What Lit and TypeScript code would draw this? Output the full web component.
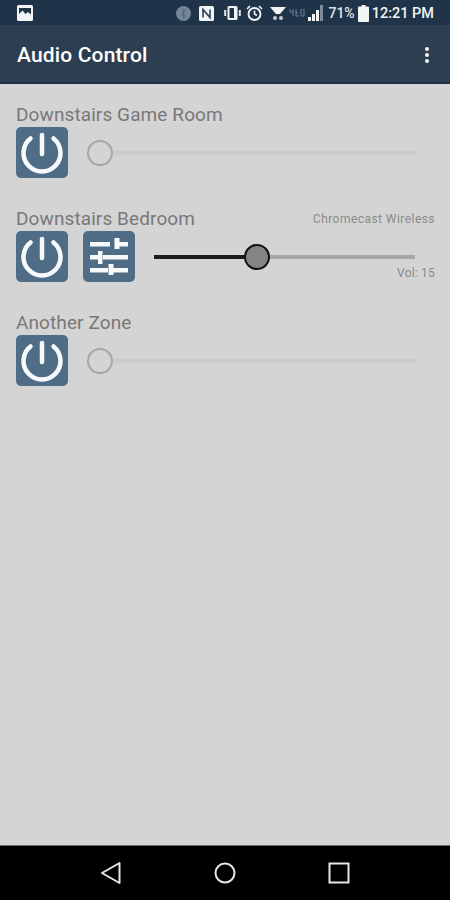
import { LitElement, css, html, svg } from "lit";
import { customElement, property } from "lit/decorators.js";

const powerIcon = svg`
  <path d="M14.500 11.500A18.500 18.500 0 1 0 37.500 11.500" fill="none" stroke="#f7f9fa" stroke-width="4.500" stroke-linecap="round"/>
  <path d="M26 8v19" fill="none" stroke="#f7f9fa" stroke-width="4.500" stroke-linecap="round"/>`;

const tuneIcon = svg`
  <g fill="#f7f9fa">
    <rect x="7" y="11" width="20" height="4.500"/><rect x="36" y="11" width="9" height="4.500"/><rect x="31.500" y="7" width="5" height="11"/>
    <rect x="7" y="24" width="8" height="4.500"/><rect x="20" y="24" width="25" height="4.500"/><rect x="15" y="20" width="4.500" height="13"/>
    <rect x="7" y="37" width="18" height="4.500"/><rect x="30" y="37" width="15" height="4.500"/><rect x="25.500" y="33" width="5" height="11"/>
  </g>`;

@customElement("vol-slider")
class VolSlider extends LitElement {
  @property({ type: Number }) value = 0;
  @property({ type: Boolean }) active = false;

  static styles = css`
    :host {
      display: block;
      flex: 1;
    }
    .track {
      position: relative;
      height: 4px;
      background: #cbcbcb;
    }
    .track.on {
      background: #a8a8a8;
    }
    .fill {
      height: 100%;
      background: #1c1c1c;
    }
    .thumb {
      position: absolute;
      top: 50%;
      width: 26px;
      height: 26px;
      box-sizing: border-box;
      border-radius: 50%;
      border: 2px solid #a6a6a6;
      background: #d4d4d4;
      transform: translate(-50%, -50%);
    }
    .on .thumb {
      border-color: #141414;
      background: #858585;
    }
  `;

  render() {
    const pct = `${this.value}%`;
    return html`<div class="track ${this.active ? "on" : ""}">
      <div class="fill" style="width: ${pct}"></div>
      <div class="thumb" style="left: ${pct}"></div>
    </div>`;
  }
}

@customElement("app-root")
class AppRoot extends LitElement {
  static styles = css`
    :host {
      display: flex;
      flex-direction: column;
      height: 900px;
      width: 450px;
      overflow: hidden;
      background: #d4d4d4;
      font-family: Roboto, "Liberation Sans", sans-serif;
    }
    .status {
      display: flex;
      align-items: center;
      height: 25px;
      padding: 1px 16px 0 17px;
      box-sizing: border-box;
      background: #1f3349;
      color: #f2f4f6;
      flex: none;
    }
    .status svg {
      display: block;
      flex: none;
    }
    .spacer {
      flex: 1;
    }
    .pct {
      font-size: 14px;
      font-weight: 500;
      margin-left: 4px;
      color: #dfe3e7;
    }
    .clock {
      font-size: 14.500px;
      font-weight: 500;
      margin-left: 3px;
    }
    .appbar {
      display: flex;
      align-items: center;
      justify-content: space-between;
      height: 59px;
      padding: 3px 21px 0 17px;
      box-sizing: border-box;
      background: #2c3e50;
      border-bottom: 2px solid #1b3348;
      color: #fff;
      flex: none;
    }
    .title {
      font-size: 21px;
      font-weight: 500;
      letter-spacing: 0.15px;
    }
    .dots {
      display: flex;
      flex-direction: column;
      gap: 2px;
    }
    .dots span {
      width: 4px;
      height: 4px;
      border-radius: 50%;
      background: #f4f4f4;
    }
    .content {
      flex: 1;
      padding: 19px 15px 0 16px;
    }
    .zone {
      height: 104px;
    }
    .head {
      display: flex;
      align-items: center;
      justify-content: space-between;
      height: 23px;
      margin-bottom: 1px;
    }
    .name {
      font-size: 19px;
      letter-spacing: 0.1px;
      color: #787878;
    }
    .source {
      font-size: 12px;
      color: #8a8a8a;
      letter-spacing: 0.45px;
    }
    .controls {
      display: flex;
      align-items: center;
      height: 51px;
    }
    .btn {
      width: 52px;
      height: 51px;
      border-radius: 5px;
      background: #4f6d86;
      flex: none;
    }
    .btn svg {
      display: block;
    }
    .btn + .btn {
      margin-left: 15px;
    }
    .slider-wrap {
      flex: 1;
      display: flex;
      padding: 0 20px 0 19px;
      position: relative;
    }
    .off {
      margin-left: 13px;
    }
    .vol {
      position: absolute;
      right: 0;
      top: 11px;
      font-size: 12px;
      color: #8a8a8a;
      letter-spacing: 0.2px;
    }
    .nav {
      display: flex;
      align-items: center;
      justify-content: center;
      gap: 90px;
      height: 55px;
      background: #000;
      border-top: 1px solid #6b6b6b;
      box-sizing: border-box;
      flex: none;
    }
    .nav svg {
      display: block;
    }
  `;

  private zone(name: string, opts: { source?: string; vol?: number; tune?: boolean } = {}) {
    const on = opts.vol !== undefined;
    return html`<div class="zone">
      <div class="head">
        <span class="name">${name}</span>
        ${opts.source ? html`<span class="source">${opts.source}</span>` : ""}
      </div>
      <div class="controls">
        <div class="btn"><svg width="52" height="51" viewBox="0 0 52 51">${powerIcon}</svg></div>
        ${opts.tune
          ? html`<div class="btn"><svg width="52" height="51" viewBox="0 0 52 51">${tuneIcon}</svg></div>`
          : ""}
        <div class="slider-wrap">
          <vol-slider class=${on ? "" : "off"} .value=${on ? 39.5 : 0} .active=${on}></vol-slider>
          ${on ? html`<div class="vol">Vol: ${opts.vol}</div>` : ""}
        </div>
      </div>
    </div>`;
  }

  render() {
    return html`
      <div class="status">
        <svg width="16" height="16" viewBox="0 0 16 16">
          <rect width="16" height="16" rx="1.500" fill="#f2f4f6"/>
          <path d="M2 3h12v6.500L11 7 8.500 9 5.500 5.500 2 9z" fill="#1f3349"/>
        </svg>
        <div class="spacer"></div>
        <svg width="15" height="15" viewBox="0 0 15 15">
          <circle cx="7.500" cy="7.500" r="7.500" fill="#75869a"/>
          <path d="M4.800 5l5 5-2.400 2.400V2.600L9.800 5 4.800 10" fill="none" stroke="#52667c" stroke-width="1"/>
        </svg>
        <svg style="margin-left:8px" width="15" height="15" viewBox="0 0 15 15">
          <rect width="15" height="15" rx="1.500" fill="#f2f4f6"/>
          <path d="M4 11.500V3.500l7 8V3.500" fill="none" stroke="#2d4259" stroke-width="1.600"/>
        </svg>
        <svg style="margin-left:10px" width="17" height="14" viewBox="0 0 17 14">
          <path d="M1.200 4v6M15.800 4v6" stroke="#e6e9ec" stroke-width="2"/>
          <rect x="3.500" y="0" width="10" height="14" rx="1.500" fill="#f2f4f6"/>
          <rect x="5.500" y="2" width="4.500" height="10" fill="#1f3349"/>
        </svg>
        <svg style="margin-left:5px" width="17" height="17" viewBox="0 0 17 17">
          <circle cx="8.500" cy="9" r="6" fill="none" stroke="#f2f4f6" stroke-width="1.900"/>
          <path d="M8.500 5.500V9l2.500 1.500M1 4l3-3M16 4l-3-3" fill="none" stroke="#f2f4f6" stroke-width="1.600"/>
        </svg>
        <svg style="margin-left:7px" width="16" height="15" viewBox="0 0 16 15">
          <path d="M0 1h16l-6 7H6z" fill="#f2f4f6"/><circle cx="5" cy="12" r="2" fill="#c5ccd2"/><circle cx="11" cy="12" r="2" fill="#c5ccd2"/>
        </svg>
        <svg style="margin-left:3px" width="17" height="8" viewBox="0 0 17 8">
          <path d="M1 0v3h3M4 0v7M7 0v7h3M7 3.500h2M12 0v7h3V0z" fill="none" stroke="#6e8195" stroke-width="1"/>
        </svg>
        <svg style="margin-left:2px" width="16" height="16" viewBox="0 0 16 16">
          <path d="M0 16h3v-4H0zM4 16h3v-7H4zM8 16h3V5H8z" fill="#f2f4f6"/><path d="M12 16h3V0h-3z" fill="#7f8d9b"/>
        </svg>
        <span class="pct">71%</span>
        <svg style="margin-left:3px" width="11" height="17" viewBox="0 0 11 17">
          <path d="M3.500 0h4v1.500H10a1 1 0 0 1 1 1V16a1 1 0 0 1-1 1H1a1 1 0 0 1-1-1V2.500a1 1 0 0 1 1-1h2.500z" fill="#f2f4f6"/>
        </svg>
        <span class="clock">12:21 PM</span>
      </div>
      <div class="appbar">
        <span class="title">Audio Control</span>
        <div class="dots"><span></span><span></span><span></span></div>
      </div>
      <div class="content">
        ${this.zone("Downstairs Game Room")}
        ${this.zone("Downstairs Bedroom", { source: "Chromecast Wireless", vol: 15, tune: true })}
        ${this.zone("Another Zone")}
      </div>
      <div class="nav">
        <svg width="24" height="24" viewBox="0 0 24 24">
          <path d="M20.500 2v20L3 12z" fill="none" stroke="#e8e8e8" stroke-width="2" stroke-linejoin="round"/>
        </svg>
        <svg width="24" height="24" viewBox="0 0 24 24">
          <circle cx="12" cy="12" r="9.500" fill="none" stroke="#e8e8e8" stroke-width="2"/>
        </svg>
        <svg width="24" height="24" viewBox="0 0 24 24">
          <rect x="2.500" y="2.500" width="19" height="19" fill="none" stroke="#e8e8e8" stroke-width="2"/>
        </svg>
      </div>
    `;
  }
}
